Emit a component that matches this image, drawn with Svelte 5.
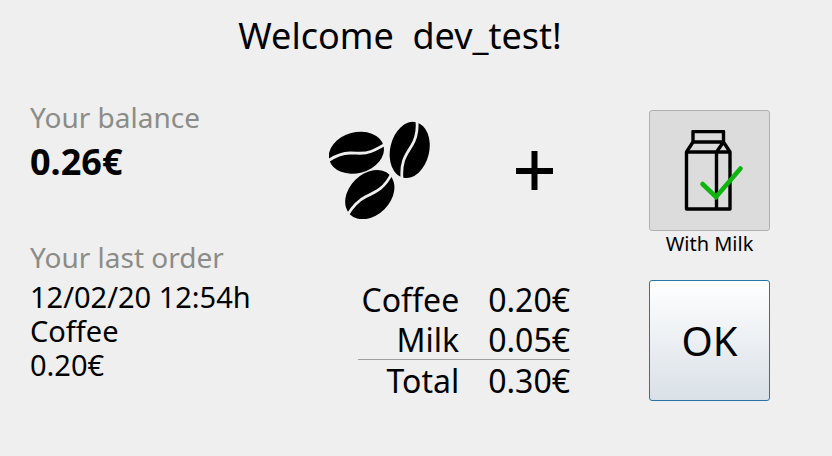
<script>
  const user = 'dev_test';
  const balance = 0.26;
  const lastOrder = { time: '12/02/20 12:54h', item: 'Coffee', price: 0.2 };
  const coffeePrice = 0.25;
  const milkPrice = 0.05;
  const items = [
    { name: 'Coffee', price: 0.2 },
    { name: 'Milk', price: milkPrice },
  ];
  const total = coffeePrice + milkPrice;
  const euro = (n) => n.toFixed(2) + '€';

  let withMilk = $state(true);
</script>

<main>
  <h1>Welcome&nbsp; {user}!</h1>

  <div class="columns">
    <div class="account">
      <section>
        <h2>Your balance</h2>
        <p class="balance">{euro(balance)}</p>
      </section>
      <section>
        <h2>Your last order</h2>
        <p>{lastOrder.time}</p>
        <p>{lastOrder.item}</p>
        <p>{euro(lastOrder.price)}</p>
      </section>
    </div>

    <div class="order">
      <div class="recipe">
        <svg width="102" height="98" viewBox="9 11 102 98" role="img" aria-label="Coffee beans">
          <g fill="#000">
            <ellipse cx="36.4" cy="42.7" rx="28" ry="20.4" transform="rotate(-15 36.4 42.7)" />
            <ellipse cx="89.7" cy="39.9" rx="28.5" ry="19.5" transform="rotate(-77 89.7 39.9)" />
            <ellipse cx="49.8" cy="84.6" rx="28" ry="20.7" transform="rotate(-45 49.8 84.6)" />
          </g>
          <g fill="none" stroke="#efefef" stroke-width="2.8">
            <path d="M8 51C15 46 21 43.3 30 43C38 42.8 43 44.6 51 41.5C56 39.5 59 37.5 65 34.5" />
            <path d="M96.8 10C98 20 96.5 28 91.5 36C86 45 80.5 51 82 69" />
            <path d="M27.5 105C33 96 39 90 46 86.5C56 82 65 78 72 63" />
          </g>
        </svg>
        <svg width="38" height="40" viewBox="0 0 38 40" role="img" aria-label="plus">
          <path d="M18.5 1V40M0 21H37" stroke="#000" stroke-width="6" />
        </svg>
      </div>
      <table>
        <tbody>
          {#each items as item}
            <tr><th scope="row">{item.name}</th><td>{euro(item.price)}</td></tr>
          {/each}
        </tbody>
        <tfoot>
          <tr><th scope="row">Total</th><td>{euro(total)}</td></tr>
        </tfoot>
      </table>
    </div>

    <div class="actions">
      <button
        class="milk"
        aria-labelledby="milk-label"
        aria-pressed={withMilk}
        onclick={() => (withMilk = !withMilk)}
      >
        <svg width="60" height="82" viewBox="0 0 60 82" fill="none" aria-hidden="true">
          <path
            d="M9 12V1.500H39.500V12ZM9 12L2.500 22V79H46V22L39.500 12L32.500 22V79M2.500 22H46"
            stroke="#000"
            stroke-width="3.400"
            stroke-linejoin="round"
          />
          {#if withMilk}
            <path
              d="M18.500 54L32 67L56.500 38.500"
              stroke="#0db50d"
              stroke-width="4.600"
              stroke-linecap="round"
            />
          {/if}
        </svg>
      </button>
      <span id="milk-label">With Milk</span>
      <button class="ok">OK</button>
    </div>
  </div>
</main>

<style>
  :global(body) {
    margin: 0;
    background: #efefef;
  }
  main {
    box-sizing: border-box;
    min-height: 100vh;
    padding: 14px 62px 0 30px;
    color: #000;
    font: 29px/34px 'Noto Sans', sans-serif;
  }
  h1,
  h2,
  p {
    margin: 0;
    font-size: inherit;
    font-weight: 400;
  }
  h1 {
    font-size: 36px;
    line-height: 44px;
    text-align: center;
  }
  .columns {
    display: flex;
    gap: 79px;
    margin-top: 41px;
  }
  .account {
    flex: 1;
    display: flex;
    flex-direction: column;
    gap: 55px;
    min-width: 0;
    white-space: nowrap;
  }
  h2 {
    margin-bottom: 5px;
    color: #8b8c88;
    font-size: 28px;
    line-height: 36px;
  }
  .balance {
    font-size: 36px;
    font-weight: 700;
    line-height: 44px;
  }
  .order {
    flex: 0 0 241px;
  }
  .recipe {
    display: flex;
    align-items: center;
    justify-content: space-between;
    margin: 22px 16px 60px 0;
  }
  table {
    width: 212px;
    margin-left: auto;
    border-collapse: collapse;
    font-size: 32px;
    line-height: 38px;
  }
  th,
  td {
    padding: 2px 0 0;
    font-weight: 400;
    text-align: right;
  }
  td {
    width: 1px;
    padding-left: 29px;
  }
  tfoot tr {
    border-top: 1px solid #a0a0a0;
  }
  .actions {
    display: flex;
    flex-direction: column;
    align-items: center;
    padding-top: 11px;
  }
  button {
    display: flex;
    align-items: center;
    justify-content: center;
    width: 121px;
    height: 121px;
    padding: 0;
    border: 1px solid #b0b0b0;
    border-radius: 3px;
    color: #000;
    font: inherit;
  }
  .milk {
    padding-left: 8px;
    background: #dcdcdc;
  }
  .actions span {
    margin-bottom: 23px;
    font-size: 20px;
    line-height: 26px;
  }
  .ok {
    border-color: #2874a6;
    background: linear-gradient(#fff, #d9e0e7);
    font-size: 40px;
  }
</style>
